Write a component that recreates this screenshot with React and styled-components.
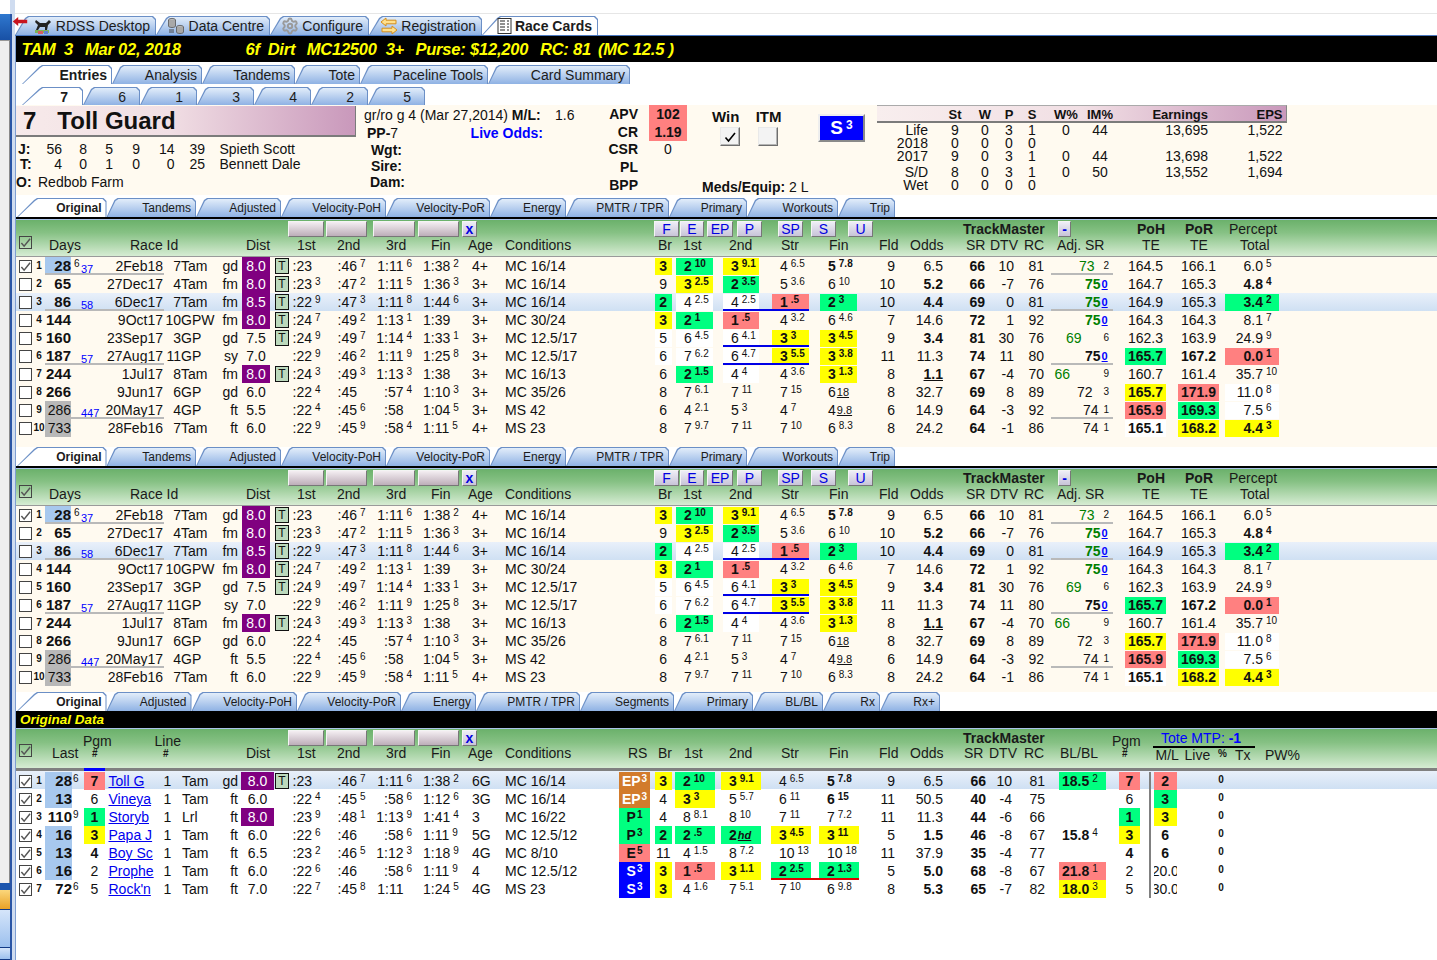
import React from 'react';
import styled, { createGlobalStyle } from 'styled-components';
import { Settings } from 'lucide-react';

const Global = createGlobalStyle`
  html, body { margin: 0; padding: 0; background: #fff; overflow: hidden; }
  body { font-family: "Liberation Sans", Arial, sans-serif; font-size: 14px; color: #111; }
  * { box-sizing: border-box; }
`;

const FILL = { y: '#ffff00', g: '#00ff80', r: '#ff8080', w: '#ffffff', o: '#d27b2c', b: '#0000ff' };
const CREAM = '#fffaf0';

const Page = styled.div`display: flex; width: 1437px; height: 960px; overflow: hidden;`;
const Sidebar = styled.aside`flex: none; width: 15px; display: flex; background: #cfdcf0;`;
const SideCol = styled.div`flex: none; width: 10px; display: flex; flex-direction: column;`;
const SideDark = styled.div`flex: none; width: 2px; margin-top: 14px; background: #2a55a5;`;
const SideBlank = styled.div`flex: none; height: 14px; background: #fff;`;
const SideTitle = styled.div`flex: none; height: 26px; background: linear-gradient(#2f78cf, #1850a5);`;
const SidePane = styled.div`flex: 1; background: #efefef; border-top: 1px solid #999; border-right: 1px solid #8a8a8a;`;
const SideStrip = styled.div`flex: none; height: 7px; background: #1d56ad;`;
const SideOrange = styled.div`flex: none; height: 20px; background: linear-gradient(#fbd77c, #e9a126); border-bottom: 1px solid #123a85;`;
const SideBlue = styled.div`flex: none; height: ${p => p.$h}px; background: linear-gradient(#d5e5fa, #9cc0ee); border-bottom: 1px solid #123a85;`;

const Main = styled.main`position: relative; flex: none; width: 1422px; border-left: 1px solid #7e9ed2;`;

const TopTabs = styled.div`
  height: 36px; padding-top: 16px; display: flex; margin-left: -1px;
  background: linear-gradient(#fff 13px, #e6e6e6 13px, #e6e6e6 14px, #fff 14px);
  border-bottom: 1px solid #4a78c0;
`;
const TabRow = styled.div`
  display: flex; height: ${p => p.$h}px; margin-top: ${p => p.$mt || 0}px; padding-left: ${p => p.$pl || 0}px;
`;
const Tab = styled.div`
  position: relative; z-index: 0; flex: none; width: ${p => p.$w}px; height: 100%;
  display: flex; align-items: center; justify-content: flex-end; gap: 3px;
  padding-right: ${p => p.$pr ?? 5}px; padding-top: ${p => (p.$fs ? 0 : 1)}px;
  font-size: ${p => p.$fs || 14}px; font-weight: ${p => (p.$active ? 700 : 400)}; color: #1c1c1c; white-space: nowrap;
  &::before, &::after {
    content: ""; position: absolute; z-index: -1;
    clip-path: polygon(0 100%, ${p => p.$slant - 3}px 2px, ${p => p.$slant}px 0, calc(100% - 3px) 0, 100% 3px, 100% 100%);
  }
  &::before { inset: 0; background: #6b8fc6; }
  &::after {
    inset: 1px 1px 0 1px;
    background: ${p => (p.$active ? '#fff' : 'linear-gradient(#e2edfa, #8fb2e4)')};
  }
`;
const RedArrow = styled.svg`position: absolute; left: -4px; top: 17px; z-index: 3;`;

const Line = styled.div`
  display: flex; align-items: center; height: ${p => p.$h}px; line-height: 16px;
  padding-bottom: ${p => p.$pb || 0}px; margin-top: ${p => p.$mt || 0}px;
`;
const Seg = styled.div`
  flex: none; white-space: nowrap; width: ${p => p.$w}px; margin-left: ${p => p.$ml}px;
  text-align: ${p => p.$al || 'left'}; font-weight: ${p => p.$b ? 700 : 'inherit'};
`;
const segs = (items, from = 16) => {
  let x = from;
  return items.map(([a, b, content, al, bold], i) => {
    const ml = a - x; x = b;
    return <Seg key={i} $ml={ml} $w={b - a} $al={al} $b={bold}>{content}</Seg>;
  });
};

const RaceBar = styled(Line)`
  background: #000; color: #ffff00; font-weight: 700; font-style: italic; font-size: 16.5px;
  letter-spacing: -0.2px;
`;

const Panel = styled.section`
  height: 90px; background: ${CREAM}; display: flex;
`;
const PanelCol = styled.div`flex: none; width: ${p => p.$w}px; display: flex; flex-direction: column;`;
const NameBar = styled.div`
  flex: none; width: 340px; height: 31px; margin-top: 1px; display: flex; align-items: center; gap: 21px; padding-left: 7px;
  font-size: 24px; font-weight: 700; color: #111;
  background: linear-gradient(90deg, #f7eaea, #f1dfe4 45%, #c998bb);
  border-bottom: 2px solid #7b7b7b; border-right: 1px solid #7b7b7b;
`;
const Bold = styled.b`font-weight: 700;`;
const BlueBold = styled.b`font-weight: 700; color: #0000ff;`;
const Rate = styled.div`
  flex: none; width: 38px; height: 18px; display: flex; align-items: center; justify-content: center;
  margin-left: 11px; font-weight: ${p => p.$fill ? 700 : 400}; background: ${p => FILL[p.$fill] || 'transparent'};
`;
const RatingRow = styled.div`display: flex; height: ${p => p.$h}px; align-items: center;`;
const RatingLabel = styled.div`flex: none; width: 48px; text-align: right; font-weight: 700;`;
const WinHead = styled.div`display: flex; height: 22px; align-items: center; font-size: 15px; font-weight: 700;`;
const Bevel = styled.div`
  flex: none; width: 20px; height: 19px; background: #f3f3f3; display: flex; align-items: center; justify-content: center;
  border: 1px solid; border-color: #e9e9e9 #6e6e6e #6e6e6e #e9e9e9; box-shadow: inset -1px -1px 0 #b4b4b4;
  margin-left: ${p => p.$ml}px;
`;
const S3 = styled.div`
  flex: none; width: 47px; height: 28px; margin-top: 9px; background: #0000ff; color: #fff; font-weight: 700; font-size: 19px;
  border: 2px solid; border-color: #eee #8a8a8a #8a8a8a #eee;
  display: flex; align-items: center; justify-content: center; gap: 3px;
`;
const S3Sup = styled.span`font-size: 12px; margin-bottom: 7px;`;
const StatRow = styled.div`
  display: grid; align-items: center; width: 410px; height: ${p => p.$h}px; line-height: ${p => p.$h}px; font-size: 14px;
  margin-top: ${p => p.$mt || 0}px;
  grid-template-columns: 51px 17px 20px 40px 8px 38px 30px 38px 89px 74.5px;
`;
const StatHeadGrid = styled(StatRow)`
  font-size: 13px; font-weight: 700; height: 18px; line-height: 17px;
  background: linear-gradient(90deg, #f8eeee, #f1dfe4 50%, #c998bb);
  border-top: 1px solid #aaa; border-bottom: 2px solid #7b7b7b; border-right: 1px solid #888;
`;
const StatCell = styled.div`text-align: ${p => p.$al || 'center'}; white-space: nowrap; justify-self: ${p => p.$al ? 'stretch' : 'center'};`;

const Spacer = styled.div`height: ${p => p.$h}px;`;
const SectionBody = styled.section`background: ${CREAM}; padding-bottom: ${p => p.$pb || 0}px;`;
const TabRule = styled.div`height: 3px; background: #000; border-bottom: 1px solid #a9c2e8;`;
const TabRuleThin = styled.div`height: 1px; background: #a9c2e8;`;
const Head = styled.div`
  background: linear-gradient(#6bb16b, #86c184 35%, #d6ecd3);
  border-bottom: ${p => p.$plain ? 'none' : '1px solid #9a9a9a'};
  font-size: 14px; color: #1a1a1a;
`;
const Btn = styled.div`
  height: 16px; line-height: 14px; text-align: center; color: #0000e0; font-size: 14px;
  background: linear-gradient(#f4eef2, #bdaeb9);
  border: 1px solid; border-color: #f4f4f4 #777 #777 #f4f4f4;
`;
const LetterBtn = styled(Btn)`background: linear-gradient(#eeeef6, #c8c4d8);`;
const GrayStrip = styled.div`height: 3px; background: #808080; display: flex;`;
const BlueMark = styled.div`flex: none; width: 21px; margin-left: 68px; background: #0000ff;`;
const Small = styled.span`font-size: 10px; font-weight: 700;`;
const Tote = styled.div`margin-top: 3px; border-bottom: 2px solid #000; height: 17px; line-height: 15px; color: #0000ff; padding-left: 8px;`;
const Drop = styled.div`margin-top: 6px;`;
const Lower = styled.div`margin-top: 4px;`;
const HeadCheck = styled.div`margin-bottom: 5px;`;

const Row = styled.div`
  position: relative; display: grid; grid-template-columns: ${p => p.$tracks}; height: 18px; line-height: 18px; font-size: 14px;
  align-items: center;
  background: ${p => p.$hl ? 'linear-gradient(#e9f0fa, #cfe0f3)' : 'transparent'};
`;
const RowRule = styled.div`
  position: absolute; bottom: ${p => p.$b ?? 0}px; left: ${p => p.$from - 16}px; width: ${p => p.$to - p.$from}px; height: 2px;
  background: ${p => p.$c};
`;
const CheckBox = styled.div`
  flex: none; width: 13px; height: 13px; margin-left: 3px; background: #fff; border: 1px solid #444; display: flex; align-items: center; justify-content: center;
`;
const CheckHead = styled(CheckBox)`margin-left: 0; background: transparent;`;
const Idx = styled.div`font-size: 10px; font-weight: 700; text-align: center; white-space: nowrap;`;
const Days = styled.div`
  height: 18px; text-align: right; font-weight: ${p => p.$plain ? 400 : 700}; font-size: ${p => p.$plain ? 14 : 15}px;
  background: ${p => p.$bg || 'transparent'};
`;
const Flex = styled.div`display: flex; align-items: center; height: 18px; white-space: nowrap; padding-left: ${p => p.$pl || 0}px;`;
const Sup = styled.span`
  flex: none; font-size: 10px; line-height: 10px; margin-left: ${p => p.$ml ?? 2}px; margin-bottom: 4px;
  width: ${p => p.$w ? `${p.$w}px` : 'auto'};
  font-weight: ${p => p.$b ? 700 : 400};
`;
const UnderSup = styled(Sup)`font-size: 11px; text-decoration: underline; margin-left: 1px; margin-bottom: 0;`;
const HdSup = styled(Sup)`font-size: 11px; font-style: italic; text-decoration: underline; margin-bottom: 0;`;
const BlueNum = styled.span`font-size: 11px; color: #0000ff; margin-top: 5px;`;
const RightCell = styled.div`text-align: right; white-space: nowrap; font-weight: ${p => p.$b ? 700 : 400}; text-decoration: ${p => p.$u ? 'underline' : 'none'};`;
const LeftCell = styled.div`white-space: nowrap; padding-left: ${p => p.$pl || 0}px;`;
const CenterCell = styled.div`text-align: center; white-space: nowrap;`;
const DistBox = styled.div`
  height: 18px; margin-left: ${p => p.$ml}px; width: ${p => p.$w}px; text-align: center;
  background: ${p => p.$fill ? '#800080' : 'transparent'}; color: ${p => p.$fill ? '#fff' : '#111'};
`;
const TBox = styled.div`
  height: 16px; width: 14px; margin-left: ${p => p.$ml}px; line-height: 14px; font-size: 12px; text-align: center; background: #bcd9bc; border: 1px solid #111;
`;
const TimeMain = styled.span`flex: none; width: ${p => p.$w ? `${p.$w}px` : 'auto'}; text-align: right;`;
const Place = styled.div`
  display: flex; align-items: center; overflow: hidden; white-space: nowrap;
  height: ${p => p.$tall ? 18 : 17}px; margin-left: ${p => p.$ml}px; width: ${p => p.$w}px;
  padding-left: ${p => p.$pl ?? 8}px; justify-content: ${p => p.$center ? 'center' : 'flex-start'};
  background: ${p => FILL[p.$fill] || 'transparent'}; color: ${p => p.$fill === 'b' || p.$fill === 'o' ? '#fff' : '#111'};
  font-weight: ${p => p.$b ? 700 : 400};
`;
const AdjValue = styled.span`
  flex: none; color: ${p => p.$c}; font-weight: ${p => p.$b ? 700 : 400}; margin-left: ${p => p.$indent}px;
`;
const AdjLink = styled.span`flex: none; color: #0000ff; font-size: 11px; font-weight: 700; text-decoration: underline; margin-left: 1px;`;
const AdjSup = styled.span`flex: none; font-size: 10px; font-weight: 400; margin-left: auto; margin-right: 4px;`;
const TeMain = styled.span`flex: none; width: 38px; text-align: right;`;
const HorseLink = styled.a`color: #0000ee; text-decoration: underline; white-space: nowrap; padding-left: 3.5px;`;
const VRule = styled.div`height: 18px; width: 2px; margin-left: 3px; background: #808080;`;
const ZeroCell = styled.div`font-size: 10px; text-align: center; font-weight: 700; margin-bottom: 2px;`;
const BBar = styled(Line)`background: #000; color: #ffff00; font-style: italic; font-weight: 700; font-size: 13.5px;`;
const BBody = styled.section`background: #fff;`;

const Tick = ({ c = '#555', s = 11 }) => (
  <svg width={s} height={s} viewBox="0 0 12 12"><path d="M1.5 6.5 L4.5 10 L11 2" fill="none" stroke={c} strokeWidth="1.6" /></svg>
);

/* ---------- top tab icons ---------- */
const HorseIcon = () => (
  <svg width="20" height="18" viewBox="0 0 20 18">
    <rect x="2" y="13" width="14" height="3" fill="#7fb257" />
    <rect x="5" y="14" width="5" height="3" fill="#d45f5f" />
    <rect x="11" y="14" width="4" height="3" fill="#5f7fd4" />
    <path d="M3 3 L7 6 L13 6 L16 3 L18 5 L15 8 L14 13 L12 13 L12 10 L7 10 L5 13 L3 13 L5 8 L2 5 Z" fill="#222" />
  </svg>
);
const DataIcon = () => (
  <svg width="19" height="18" viewBox="0 0 19 18">
    <ellipse cx="5" cy="3" rx="3.5" ry="1.6" fill="#b9b9b9" stroke="#555" strokeWidth=".8" />
    <path d="M1.5 3 V9 C1.5 11 8.5 11 8.5 9 V3" fill="#a8a8a8" stroke="#555" strokeWidth=".8" />
    <ellipse cx="13" cy="10" rx="3.5" ry="1.6" fill="#b9b9b9" stroke="#555" strokeWidth=".8" />
    <path d="M9.5 10 V15 C9.5 17 16.5 17 16.5 15 V10" fill="#a8a8a8" stroke="#555" strokeWidth=".8" />
    <path d="M2 13 H7 M2 15 H7" stroke="#444" strokeWidth="1" />
  </svg>
);
const SwapIcon = () => (
  <svg width="18" height="18" viewBox="0 0 18 18">
    <path d="M1 5 L6 1 V3.2 H16 V6.8 H6 V9 Z" fill="#ffe08c" stroke="#d68f1a" strokeWidth="1" strokeLinejoin="round" />
    <path d="M17 13 L12 9 V11.2 H2 V14.8 H12 V17 Z" fill="#ffe08c" stroke="#d68f1a" strokeWidth="1" strokeLinejoin="round" />
  </svg>
);
const CardIcon = () => (
  <svg width="15" height="16" viewBox="0 0 15 16">
    <rect x="1" y="0.5" width="13" height="15" fill="#fff" stroke="#333" />
    <path d="M3 3 H8 M3 6 H8 M3 9 H8 M3 12 H8 M10 3 H12 M10 6 H12 M10 9 H12 M10 12 H12" stroke="#222" strokeWidth="1.2" />
  </svg>
);

/* ---------- table data ---------- */
const P = (main, sup, code = '') => ({ main, sup, code });
const rowsA = [
  { n: '1', chk: 1, days: '28', bg: '#a7c8ee', ds: '6', blue: '37', date: '2Feb18', tn: '7', trk: 'Tam', s: 'gd', dist: '8.0', df: 1, t: 1, t1: [':23'], t2: [':46', '7'], t3: ['1:11', '6'], t4: ['1:38', '2'], age: '4+', cond: 'MC 16/14', br: ['3', 'y'], c1: P('2', '10', 'g'), c2: P('3', '9.1', 'y'), c3: P('4', '6.5'), c4: P('5', '7.8', 'B'), fld: '9', odds: '6.5', sr: '66', dtv: '10', rc: '81', adj: { v: '73', sup: '2', i: 28, c: '#008000' }, adjRule: 1, poh: ['164.5'], por: ['166.1'], pct: ['6.0', '5'], grayRule: 1 },
  { n: '2', days: '65', date: '27Dec17', tn: '4', trk: 'Tam', s: 'fm', dist: '8.0', df: 1, t: 1, t1: [':23', '3'], t2: [':47', '2'], t3: ['1:11', '5'], t4: ['1:36', '3'], age: '3+', cond: 'MC 16/14', br: ['9'], c1: P('3', '2.5', 'y'), c2: P('2', '3.5', 'g'), c3: P('5', '3.6'), c4: P('6', '10'), fld: '10', odds: '5.2', ob: 1, sr: '66', dtv: '-7', rc: '76', adj: { v: '75', link: '0', i: 34, c: '#008000', b: 1 }, poh: ['164.7'], por: ['165.3'], pct: ['4.8', '4', '', 1] },
  { n: '3', hl: 1, days: '86', blue: '58', date: '6Dec17', tn: '7', trk: 'Tam', s: 'fm', dist: '8.5', df: 1, t: 1, t1: [':22', '9'], t2: [':47', '3'], t3: ['1:11', '8'], t4: ['1:44', '6'], age: '3+', cond: 'MC 16/14', br: ['2', 'g'], c1: P('4', '2.5', 'w'), c2: P('4', '2.5', 'w'), c3: P('1', '.5', 'r'), c4: P('2', '3', 'g'), fld: '10', odds: '4.4', ob: 1, sr: '69', dtv: '0', rc: '81', adj: { v: '75', link: '0', i: 34, c: '#008000', b: 1 }, adjRule: 1, poh: ['164.9'], por: ['165.3'], pct: ['3.4', '2', 'g', 1], grayRule: 1, blueRule: 1 },
  { n: '4', days: '144', date: '9Oct17', tn: '10', trk: 'GPW', s: 'fm', dist: '8.0', df: 1, t: 1, t1: [':24', '7'], t2: [':49', '2'], t3: ['1:13', '1'], t4: ['1:39'], age: '3+', cond: 'MC 30/24', br: ['3', 'y'], c1: P('2', '1', 'g'), c2: P('1', '.5', 'r'), c3: P('4', '3.2'), c4: P('6', '4.6'), fld: '7', odds: '14.6', sr: '72', dtv: '1', rc: '92', adj: { v: '75', link: '0', i: 34, c: '#008000', b: 1 }, poh: ['164.3'], por: ['164.3'], pct: ['8.1', '7'] },
  { n: '5', days: '160', date: '23Sep17', tn: '3', trk: 'GP', s: 'gd', dist: '7.5', t: 1, t1: [':24', '9'], t2: [':49', '7'], t3: ['1:14', '4'], t4: ['1:33', '1'], age: '3+', cond: 'MC 12.5/17', br: ['5', 'w'], c1: P('6', '4.5', 'w'), c2: P('6', '4.1', 'w'), c3: P('3', '3', 'y'), c4: P('3', '4.5', 'y'), fld: '9', odds: '3.4', ob: 1, sr: '81', dtv: '30', rc: '76', adj: { v: '69', sup: '6', i: 15, c: '#008000' }, poh: ['162.3'], por: ['163.9'], pct: ['24.9', '9'], blueRule: 1 },
  { n: '6', days: '187', blue: '57', date: '27Aug17', tn: '11', trk: 'GP', s: 'sy', dist: '7.0', t1: [':22', '9'], t2: [':46', '2'], t3: ['1:11', '9'], t4: ['1:25', '8'], age: '3+', cond: 'MC 12.5/17', br: ['6', 'w'], c1: P('7', '6.2', 'w'), c2: P('6', '4.7', 'w'), c3: P('3', '5.5', 'y'), c4: P('3', '3.8', 'y'), fld: '11', odds: '11.3', sr: '74', dtv: '11', rc: '80', adj: { v: '75', link: '0', i: 34, c: '#111', b: 1 }, adjRule: 1, poh: ['165.7', 'g'], por: ['167.2', '', 1], pct: ['0.0', '1', 'r', 1], grayRule: 1, blueRule: 1 },
  { n: '7', days: '244', date: '1Jul17', tn: '8', trk: 'Tam', s: 'fm', dist: '8.0', df: 1, t: 1, t1: [':24', '3'], t2: [':49', '3'], t3: ['1:13', '3'], t4: ['1:38'], age: '3+', cond: 'MC 16/13', br: ['6'], c1: P('2', '1.5', 'g'), c2: P('4', '4', 'w'), c3: P('4', '3.6'), c4: P('3', '1.3', 'y'), fld: '8', odds: '1.1', ob: 1, ou: 1, sr: '67', dtv: '-4', rc: '70', adj: { v: '66', sup: '9', i: 3.5, c: '#008000' }, poh: ['160.7'], por: ['161.4'], pct: ['35.7', '10'] },
  { n: '8', days: '266', date: '9Jun17', tn: '6', trk: 'GP', s: 'gd', dist: '6.0', t1: [':22', '4'], t2: [':45'], t3: [':57', '4'], t4: ['1:10', '3'], age: '3+', cond: 'MC 35/26', br: ['8'], c1: P('7', '6.1'), c2: P('7', '11'), c3: P('7', '15'), c4: P('6', '18', 'U'), fld: '8', odds: '32.7', sr: '69', dtv: '8', rc: '89', adj: { v: '72', sup: '3', i: 26, c: '#111' }, poh: ['165.7', 'y'], por: ['171.9', 'r'], pct: ['11.0', '8', 'w'] },
  { n: '9', days: '286', plain: 1, bg: '#b8b8b8', blue: '447', date: '20May17', tn: '4', trk: 'GP', s: 'ft', dist: '5.5', t1: [':22', '4'], t2: [':45', '6'], t3: [':58'], t4: ['1:04', '5'], age: '3+', cond: 'MS 42', br: ['6'], c1: P('4', '2.1'), c2: P('5', '3'), c3: P('4', '7'), c4: P('4', '9.8', 'U'), fld: '6', odds: '14.9', sr: '64', dtv: '-3', rc: '92', adj: { v: '74', sup: '1', i: 32, c: '#111' }, adjRule: 1, poh: ['165.9', 'r'], por: ['169.3', 'g'], pct: ['7.5', '6', 'w'], grayRule: 1 },
  { n: '10', days: '733', plain: 1, bg: '#b8b8b8', date: '28Feb16', tn: '7', trk: 'Tam', s: 'ft', dist: '6.0', t1: [':22', '9'], t2: [':45', '9'], t3: [':58', '4'], t4: ['1:11', '5'], age: '4+', cond: 'MS 23', br: ['8'], c1: P('7', '9.7'), c2: P('7', '11'), c3: P('7', '10'), c4: P('6', '8.3'), fld: '8', odds: '24.2', sr: '64', dtv: '-1', rc: '86', adj: { v: '74', sup: '1', i: 32, c: '#111' }, poh: ['165.1', 'w'], por: ['168.2', 'y'], pct: ['4.4', '3', 'y', 1] },
];
const rowsB = [
  { n: '1', hl: 1, last: '28', ls: '6', bg: 1, pgm: ['7', 'r'], horse: 'Toll G', trk: 'Tam', s: 'gd', dist: '8.0', df: 1, t: 1, t1: [':23'], t2: [':46', '7'], t3: ['1:11', '6'], t4: ['1:38', '2'], age: '6G', cond: 'MC 16/14', rs: ['EP', '3', 'o'], br: ['3', 'y'], c1: P('2', '10', 'g'), c2: P('3', '9.1', 'y'), c3: P('4', '6.5'), c4: P('5', '7.8', 'B'), fld: '9', odds: '6.5', sr: '66', dtv: '10', rc: '81', bl: ['18.5', '2', 'g'], p2: ['7', 'r'], ml: ['2', 'r'] },
  { n: '2', last: '13', bg: 1, pgm: ['6'], horse: 'Vineya', trk: 'Tam', s: 'ft', dist: '6.0', t1: [':22', '4'], t2: [':45', '5'], t3: [':58', '6'], t4: ['1:12', '6'], age: '3G', cond: 'MC 16/14', rs: ['EP', '3', 'o'], br: ['4'], c1: P('3', '3', 'y'), c2: P('5', '5.7'), c3: P('6', '11'), c4: P('6', '15', 'B'), fld: '11', odds: '50.5', sr: '40', dtv: '-4', rc: '75', p2: ['6'], ml: ['3', 'g'] },
  { n: '3', last: '110', ls: '9', pgm: ['1', 'g'], horse: 'Storyb', trk: 'Lrl', s: 'ft', dist: '8.0', df: 1, t1: [':23', '9'], t2: [':48', '1'], t3: ['1:13', '9'], t4: ['1:41', '4'], age: '3', cond: 'MC 16/22', rs: ['P', '1', 'g'], br: ['4'], c1: P('8', '8.1'), c2: P('8', '10'), c3: P('7', '11'), c4: P('7', '7.2'), fld: '11', odds: '11.3', sr: '44', dtv: '-6', rc: '66', p2: ['1', 'g'], ml: ['3', 'y'] },
  { n: '4', last: '16', bg: 1, pgm: ['3', 'y'], horse: 'Papa J', trk: 'Tam', s: 'ft', dist: '6.0', t1: [':22', '6'], t2: [':46'], t3: [':58', '6'], t4: ['1:11', '9'], age: '5G', cond: 'MC 12.5/12', rs: ['P', '3', 'g'], br: ['2', 'g'], c1: P('2', '.5', 'g'), c2: P('2', 'hd', 'gH'), c3: P('3', '4.5', 'y'), c4: P('3', '11', 'y'), fld: '5', odds: '1.5', ob: 1, sr: '46', dtv: '-8', rc: '67', bl: ['15.8', '4', ''], p2: ['3', 'y'], ml: ['6', 'B'] },
  { n: '5', last: '13', bg: 1, pgm: ['4', 'B'], horse: 'Boy Sc', trk: 'Tam', s: 'ft', dist: '6.5', t1: [':23', '2'], t2: [':46', '5'], t3: ['1:12', '3'], t4: ['1:18', '9'], age: '4G', cond: 'MC 8/10', rs: ['E', '5', 'r'], br: ['11'], c1: P('4', '1.5'), c2: P('8', '7.2'), c3: P('10', '13'), c4: P('10', '18'), fld: '11', odds: '37.9', sr: '35', dtv: '-4', rc: '77', p2: ['4', 'B'], ml: ['6', 'B'] },
  { n: '6', last: '16', bg: 1, pgm: ['2'], horse: 'Prophe', trk: 'Tam', s: 'ft', dist: '6.0', t1: [':22', '6'], t2: [':46'], t3: [':58', '6'], t4: ['1:11', '9'], age: '4', cond: 'MC 12.5/12', rs: ['S', '3', 'b'], br: ['3', 'y'], c1: P('1', '.5', 'r'), c2: P('3', '1.1', 'y'), c3: P('2', '2.5', 'g'), c4: P('2', '1.3', 'g'), fld: '5', odds: '5.0', ob: 1, sr: '68', dtv: '-8', rc: '67', bl: ['21.8', '1', 'r'], p2: ['2'], ml: ['20.0', 'N'], redRule: 1 },
  { n: '7', last: '72', ls: '6', pgm: ['5'], horse: "Rock'n", trk: 'Tam', s: 'ft', dist: '7.0', t1: [':22', '7'], t2: [':45', '8'], t3: ['1:11'], t4: ['1:24', '5'], age: '4G', cond: 'MS 23', rs: ['S', '3', 'b'], br: ['3', 'y'], c1: P('4', '1.6'), c2: P('7', '5.1'), c3: P('7', '10'), c4: P('6', '9.8'), fld: '8', odds: '5.3', ob: 1, sr: '65', dtv: '-7', rc: '82', bl: ['18.0', '3', 'y'], p2: ['5'], ml: ['30.0', 'N'] },
];

const toTracks = stops => stops.slice(1).map((s, i) => `${s - stops[i]}px`).join(' ');
const TRACKS_A = toTracks([16, 33, 45, 71, 99, 163, 181, 222, 238, 272, 292, 337.5, 376, 423, 466, 505, 651, 675, 722, 771, 819, 865, 895, 943, 985, 1014, 1044, 1120, 1172, 1222, 1282]);
const TRACKS_B = toTracks([16, 33, 45, 72, 84, 105, 155, 180, 222, 238, 275, 292, 337.5, 376, 423, 466, 505, 615, 651, 675, 720, 770, 818, 865, 895, 943, 986, 1012, 1045, 1112, 1146, 1152, 1180, 1212, 1230]);

const Time = ({ v, pl, w }) => (
  <Flex $pl={pl}>
    <TimeMain $w={w}>{v[0]}</TimeMain>
    {v[1] && <Sup $ml={3}>{v[1]}</Sup>}
  </Flex>
);
const PlaceCell = ({ c, ml, w, tall }) => {
  const fill = 'ygrw'.includes(c.code[0] || '-') ? c.code[0] : undefined;
  const bold = (fill && fill !== 'w') || c.code === 'B';
  return (
    <Place $ml={ml} $w={w} $fill={fill} $tall={tall} $b={bold}>
      {c.main}
      {c.code === 'U' ? <UnderSup>{c.sup}</UnderSup>
        : c.code === 'gH' ? <HdSup $ml={1} $b>{c.sup}</HdSup>
        : <Sup $ml={3} $b={bold}>{c.sup}</Sup>}
    </Place>
  );
};

const RowA = ({ r }) => (
  <Row $tracks={TRACKS_A} $hl={r.hl}>
    <CheckBox>{r.chk && <Tick />}</CheckBox>
    <Idx>{r.n}</Idx>
    <Days $bg={r.bg} $plain={r.plain}>{r.days}</Days>
    <Flex $pl={3}>
      <Sup $ml={0} $w={7}>{r.ds}</Sup>
      {r.blue && <BlueNum>{r.blue}</BlueNum>}
    </Flex>
    <RightCell>{r.date}</RightCell>
    <RightCell>{r.tn}</RightCell>
    <LeftCell>{r.trk}</LeftCell>
    <RightCell>{r.s}</RightCell>
    <DistBox $ml={4} $w={28} $fill={r.df}>{r.dist}</DistBox>
    {r.t ? <TBox $ml={3}>T</TBox> : <span />}
    <Time v={r.t1} pl={0.5} />
    <Time v={r.t2} />
    <Time v={r.t3} w={27.5} />
    <Time v={r.t4} />
    <LeftCell $pl={6}>{r.age}</LeftCell>
    <LeftCell>{r.cond}</LeftCell>
    <Place $ml={4} $w={16.5} $pl={0} $center $fill={r.br[1]} $b={r.br[1] && r.br[1] !== 'w'}>{r.br[0]}</Place>
    <PlaceCell c={r.c1} ml={1} w={37} />
    <PlaceCell c={r.c2} ml={1} w={36} />
    <PlaceCell c={r.c3} ml={1} w={37} />
    <PlaceCell c={r.c4} ml={1} w={37} />
    <RightCell>{r.fld}</RightCell>
    <RightCell $b={r.ob} $u={r.ou}>{r.odds}</RightCell>
    <RightCell $b>{r.sr}</RightCell>
    <RightCell>{r.dtv}</RightCell>
    <RightCell>{r.rc}</RightCell>
    <Place $ml={7} $w={62} $pl={0}>
      <AdjValue $indent={r.adj.i} $c={r.adj.c} $b={r.adj.b}>{r.adj.v}</AdjValue>
      {r.adj.link && <AdjLink>{r.adj.link}</AdjLink>}
      {r.adj.sup && <AdjSup>{r.adj.sup}</AdjSup>}
    </Place>
    <Place $ml={5} $w={41} $pl={0} $center $fill={r.poh[1]} $b={!!r.poh[1]}>{r.poh[0]}</Place>
    <Place $ml={6} $w={41} $pl={0} $center $fill={r.por[1]} $b={r.por[1] || r.por[2]}>{r.por[0]}</Place>
    <Place $ml={3} $w={54} $pl={0} $fill={r.pct[2]} $b={r.pct[3]}>
      <TeMain>{r.pct[0]}</TeMain>
      <Sup $ml={3} $b={r.pct[3]}>{r.pct[1]}</Sup>
    </Place>
    {r.grayRule && <RowRule $from={45} $to={164} $c="#b9b9b9" />}
    {r.adjRule && <RowRule $from={1051} $to={1113} $c="#b9b9b9" />}
    {r.blueRule && <RowRule $from={723} $to={809} $c="#0000e6" />}
  </Row>
);

const RowB = ({ r }) => (
  <Row $tracks={TRACKS_B} $hl={r.hl}>
    <CheckBox><Tick /></CheckBox>
    <Idx>{r.n}</Idx>
    <Days $bg={r.bg ? '#a7c8ee' : undefined}>{r.last}</Days>
    <Flex $pl={1}><Sup $ml={0}>{r.ls}</Sup></Flex>
    <Place $ml={0} $w={21} $pl={0} $center $tall $fill={r.pgm[1]} $b={r.pgm[1]}>{r.pgm[0]}</Place>
    <LeftCell><HorseLink>{r.horse}</HorseLink></LeftCell>
    <CenterCell>1</CenterCell>
    <LeftCell $pl={2}>{r.trk}</LeftCell>
    <RightCell>{r.s}</RightCell>
    <DistBox $ml={3} $w={33} $fill={r.df}>{r.dist}</DistBox>
    {r.t ? <TBox $ml={0}>T</TBox> : <span />}
    <Time v={r.t1} pl={0.5} />
    <Time v={r.t2} />
    <Time v={r.t3} w={27.5} />
    <Time v={r.t4} />
    <LeftCell $pl={6}>{r.age}</LeftCell>
    <LeftCell>{r.cond}</LeftCell>
    <Place $ml={4} $w={31} $pl={0} $center $tall $fill={r.rs[2]} $b>{r.rs[0]}<Sup $ml={1} $b>{r.rs[1]}</Sup></Place>
    <Place $ml={4} $w={16.5} $pl={0} $center $tall $fill={r.br[1]} $b={r.br[1]}>{r.br[0]}</Place>
    <PlaceCell c={r.c1} ml={0} w={40} tall />
    <PlaceCell c={r.c2} ml={1} w={40} tall />
    <PlaceCell c={r.c3} ml={1} w={40} tall />
    <PlaceCell c={r.c4} ml={1} w={40} tall />
    <RightCell>{r.fld}</RightCell>
    <RightCell $b={r.ob}>{r.odds}</RightCell>
    <RightCell $b>{r.sr}</RightCell>
    <RightCell>{r.dtv}</RightCell>
    <RightCell>{r.rc}</RightCell>
    {r.bl ? (
      <Place $ml={14} $w={46.5} $pl={3} $tall $fill={r.bl[2]} $b>{r.bl[0]}<Sup $ml={3} $b={0}>{r.bl[1]}</Sup></Place>
    ) : <span />}
    <Place $ml={7} $w={21} $pl={0} $center $tall $fill={r.p2[1]} $b={r.p2[1]}>{r.p2[0]}</Place>
    <VRule />
    <Place $ml={2} $w={22.5} $pl={0} $center $tall $fill={r.ml[1] !== 'N' && r.ml[1] !== 'B' ? r.ml[1] : undefined} $b={r.ml[1] !== 'N'}>{r.ml[0]}</Place>
    <span />
    <ZeroCell>0</ZeroCell>
    {r.redRule && <RowRule $from={771} $to={859} $c="#e00000" $b={-1} />}
  </Row>
);

const blanks = [[287.5, 324], [326, 367], [373, 414.5], [418, 459]];
const blankSegs = blanks.map(b => [b[0], b[1], <Btn />]);
const xBtn = [462, 477, <LetterBtn><b>x</b></LetterBtn>];
const letters = [[654, 679, 'F'], [680, 704, 'E'], [707, 733, 'EP'], [737, 762, 'P'], [778, 803, 'SP'], [811, 836, 'S'], [848, 873, 'U']]
  .map(l => [l[0], l[1], <LetterBtn>{l[2]}</LetterBtn>]);

const headCheck = <HeadCheck><CheckHead><Tick /></CheckHead></HeadCheck>;
const topA = [
  ...blankSegs, xBtn, ...letters,
  [963, 1047, 'TrackMaster', 'left', true],
  [1058, 1071, <LetterBtn><b>-</b></LetterBtn>],
  [1137, 1165, 'PoH', 'left', true],
  [1185, 1213, 'PoR', 'left', true],
  [1229, 1280, 'Percept'],
];
const lowA = [
  [18.5, 31.5, headCheck],
  [49, 80, 'Days'], [130, 178, 'Race Id'], [246, 270, 'Dist'], [297, 315, '1st'], [337, 360, '2nd'], [386, 407, '3rd'], [431, 450, 'Fin'], [468, 493, 'Age'], [505, 573, 'Conditions'],
  [658, 670, 'Br'], [683, 702, '1st'], [729, 752, '2nd'], [781, 799, 'Str'], [829, 847, 'Fin'], [879, 898, 'Fld'], [910, 946, 'Odds'], [966, 985, 'SR'], [990, 1018, 'DTV'], [1024, 1045, 'RC'], [1057, 1106, 'Adj. SR'], [1142, 1160, 'TE'], [1190, 1208, 'TE'], [1240, 1268, 'Total'],
];
const topB = [
  [83, 111, <Drop>Pgm</Drop>], [154.5, 181, <Drop>Line</Drop>],
  ...blankSegs, xBtn,
  [963, 1048, 'TrackMaster', 'left', true],
  [1112, 1140, <Drop>Pgm</Drop>],
  [1153, 1255, <Tote>Tote MTP: <b>-1</b></Tote>],
];
const lowB = [
  [18.5, 31.5, headCheck],
  [52, 78, 'Last'], [92, 100, <Small>#</Small>], [163, 171, <Small>#</Small>], [246, 270, 'Dist'], [297, 315, '1st'], [337, 360, '2nd'], [386, 407, '3rd'], [431, 450, 'Fin'], [468, 493, 'Age'], [505, 573, 'Conditions'],
  [628, 646, 'RS'], [658, 671, 'Br'], [684, 702, '1st'], [729, 753, '2nd'], [781, 799, 'Str'], [829, 847, 'Fin'], [879, 899, 'Fld'], [910, 946, 'Odds'], [964, 984, 'SR'], [989, 1019, 'DTV'], [1024, 1045, 'RC'], [1060, 1100, 'BL/BL'], [1122, 1130, <Small>#</Small>], [1155.5, 1178, <Lower>M/L</Lower>], [1184.5, 1210, <Lower>Live</Lower>], [1218, 1226, <Small>%</Small>], [1235, 1250, <Lower>Tx</Lower>], [1265, 1298, <Lower>PW%</Lower>],
];

const SectionTabs = ({ items }) => {
  let x = 17;
  return (
    <TabRow $h={19} $pl={1}>
      {items.map(([label, end], i) => {
        const w = end - x; x = end;
        return <Tab key={label} $w={w} $fs={12} $active={i === 0} $slant={i === 0 ? 20 : 11}>{label}</Tab>;
      })}
    </TabRow>
  );
};
const TABS_A = [['Original', 106.5], ['Tandems', 196], ['Adjusted', 281], ['Velocity-PoH', 386], ['Velocity-PoR', 490], ['Energy', 566], ['PMTR / TPR', 669], ['Primary', 747], ['Workouts', 838], ['Trip', 895]];
const TABS_B = [['Original', 106.5], ['Adjusted', 191.5], ['Velocity-PoH', 297], ['Velocity-PoR', 401], ['Energy', 476], ['PMTR / TPR', 580], ['Segments', 674], ['Primary', 753], ['BL/BL', 823], ['Rx', 880], ['Rx+', 940]];

const TableA = ({ pb }) => (
  <>
    <SectionTabs items={TABS_A} />
    <TabRule />
    <Head>
      <Line $h={17}>{segs(topA)}</Line>
      <Line $h={19} $pb={3}>{segs(lowA)}</Line>
    </Head>
    <SectionBody $pb={pb}>
      {rowsA.map(r => <RowA key={r.n} r={r} />)}
    </SectionBody>
  </>
);

const stats = [
  ['Life', '9', '0', '3', '1', '0', '44', '13,695', '1,522', 0],
  ['2018', '0', '0', '0', '0', '', '', '', '', 0],
  ['2017', '9', '0', '3', '1', '0', '44', '13,698', '1,522', 0],
  ['S/D', '8', '0', '3', '1', '0', '50', '13,552', '1,694', 3],
  ['Wet', '0', '0', '0', '0', '', '', '', '', 0],
];

export default function App() {
  const top = [
    ['RDSS Desktop', 156, <HorseIcon />], ['Data Centre', 270, <DataIcon />],
    ['Configure', 369, <Settings size={18} color="#9a9a9a" strokeWidth={2.6} />],
    ['Registration', 482, <SwapIcon />],
    ['Race Cards', 598, <CardIcon />],
  ];
  const main = [['Entries', 112], ['Analysis', 202], ['Tandems', 295], ['Tote', 360], ['Paceline Tools', 488], ['Card Summary', 630]];
  const horses = [['7', 83], ['6', 140], ['1', 197], ['3', 254], ['4', 311], ['2', 368], ['5', 425]];
  let tx = 15, mx = 22, hx = 22;
  return (
    <Page>
      <Global />
      <Sidebar>
        <SideCol>
          <SideBlank />
          <SideTitle />
          <SidePane />
          <SideStrip />
          <SideOrange />
          <SideBlue $h={38} />
          <SideBlue $h={12} />
        </SideCol>
        <SideDark />
      </Sidebar>
      <Main>
        <RedArrow width="16" height="9" viewBox="0 0 16 10">
          <path d="M0 5 L6 0 V3 H16 V7 H6 V10 Z" fill="#c8141e" />
        </RedArrow>
        <TopTabs>
          {top.map(([label, end, icon], i) => {
            const w = end - tx; tx = end;
            return <Tab key={label} $w={w} $active={i === 4} $slant={i === 4 ? 18 : 13} $pr={6}>{icon}{label}</Tab>;
          })}
        </TopTabs>
        <RaceBar $h={26}>
          {segs([[21.6, 60, 'TAM'], [64, 80, '3'], [85, 200, 'Mar 02, 2018'], [245.6, 262, '6f'], [267.7, 300, 'Dirt'], [306.7, 380, 'MC12500'], [385.7, 410, '3+'], [415.5, 535, 'Purse: $12,200'], [540, 590, 'RC: 81'], [598, 680, '(MC 12.5 )']])}
        </RaceBar>
        <TabRow $h={19} $mt={3} $pl={6}>
          {main.map(([label, end], i) => {
            const w = end - mx; mx = end;
            return <Tab key={label} $w={w} $active={i === 0} $slant={i === 0 ? 20 : 11}>{label}</Tab>;
          })}
        </TabRow>
        <TabRow $h={18} $mt={3} $pl={6}>
          {horses.map(([label, end], i) => {
            const w = end - hx; hx = end;
            return <Tab key={label} $w={w} $active={i === 0} $slant={i === 0 ? 20 : 11} $pr={i === 0 ? 15 : 14}>{label}</Tab>;
          })}
        </TabRow>
        <Panel>
          <PanelCol $w={344}>
            <NameBar><span>7</span><span>Toll Guard</span></NameBar>
            <Line $h={15} $mt={4}>{segs([[18, 30, 'J:', 'left', true], [40, 62, '56', 'right'], [70, 87, '8', 'right'], [100, 113, '5', 'right'], [125, 140, '9', 'right'], [155, 174.5, '14', 'right'], [185, 205, '39', 'right'], [219.5, 340, 'Spieth Scott']])}</Line>
            <Line $h={15}>{segs([[20, 30, 'T:', 'left', true], [40, 62, '4', 'right'], [70, 87, '0', 'right'], [100, 113, '1', 'right'], [125, 140, '0', 'right'], [155, 174.5, '0', 'right'], [185, 205, '25', 'right'], [219.5, 340, 'Bennett Dale']])}</Line>
            <Line $h={16} $mt={3}>{segs([[16, 36, 'O:', 'left', true], [38, 200, 'Redbob Farm']])}</Line>
          </PanelCol>
          <PanelCol $w={230}>
            <Line $h={19}>{segs([[364, 514, <>gr/ro g 4 (Mar 27,2014) <Bold>M/L:</Bold></>], [555, 575, '1.6']], 360)}</Line>
            <Line $h={17}>{segs([[367, 400, <><Bold>PP-</Bold>7</>], [470.6, 560, <BlueBold>Live Odds:</BlueBold>]], 360)}</Line>
            <Line $h={17}>{segs([[370, 402, 'Wgt:', 'right', true]], 360)}</Line>
            <Line $h={16}>{segs([[370, 402, 'Sire:', 'right', true]], 360)}</Line>
            <Line $h={16}>{segs([[370, 402, 'Dam:', 'right', true]], 360)}</Line>
          </PanelCol>
          <PanelCol $w={116}>
            <RatingRow $h={19}><RatingLabel>APV</RatingLabel><Rate $fill="r">102</Rate></RatingRow>
            <RatingRow $h={17}><RatingLabel>CR</RatingLabel><Rate $fill="r">1.19</Rate></RatingRow>
            <RatingRow $h={18}><RatingLabel>CSR</RatingLabel><Rate>0</Rate></RatingRow>
            <RatingRow $h={18}><RatingLabel>PL</RatingLabel></RatingRow>
            <RatingRow $h={21}><RatingLabel>BPP</RatingLabel></RatingRow>
          </PanelCol>
          <PanelCol $w={112}>
            <WinHead>{segs([[712, 742, 'Win'], [755.7, 785, 'ITM']], 706)}</WinHead>
            <Line $h={19}><Bevel $ml={14}><Tick c="#000" s={12} /></Bevel><Bevel $ml={18} /></Line>
            <Line $h={16} $mt={33}>{segs([[702, 815, <><Bold>Meds/Equip:</Bold> 2 L</>]], 706)}</Line>
          </PanelCol>
          <PanelCol $w={59}>
            <S3>S<S3Sup>3</S3Sup></S3>
          </PanelCol>
          <PanelCol $w={410}>
            <StatHeadGrid>
              <StatCell /><StatCell /><StatCell>St</StatCell><StatCell>W</StatCell><StatCell>P</StatCell><StatCell>S</StatCell><StatCell>W%</StatCell><StatCell>IM%</StatCell><StatCell $al="right">Earnings</StatCell><StatCell $al="right">EPS</StatCell>
            </StatHeadGrid>
            <Spacer $h={1} />
            {stats.map(s => (
              <StatRow key={s[0]} $h={13} $mt={s[9]}>
                <StatCell $al="right">{s[0]}</StatCell><StatCell />
                {s.slice(1, 5).map((v, j) => <StatCell key={j}>{v}</StatCell>)}
                <StatCell>{s[5]}</StatCell><StatCell>{s[6]}</StatCell>
                <StatCell $al="right">{s[7]}</StatCell><StatCell $al="right">{s[8]}</StatCell>
              </StatRow>
            ))}
          </PanelCol>
        </Panel>
        <Spacer $h={3} />
        <TableA pb={10} />
        <TableA pb={6} />
        <SectionTabs items={TABS_B} />
        <BBar $h={17}>{segs([[20, 200, 'Original Data']])}</BBar>
        <TabRuleThin />
        <Head $plain>
          <Line $h={17}>{segs(topB)}</Line>
          <Line $h={22} $pb={8}>{segs(lowB)}</Line>
        </Head>
        <GrayStrip><BlueMark /></GrayStrip>
        <BBody>
          {rowsB.map(r => <RowB key={r.n} r={r} />)}
        </BBody>
      </Main>
    </Page>
  );
}
